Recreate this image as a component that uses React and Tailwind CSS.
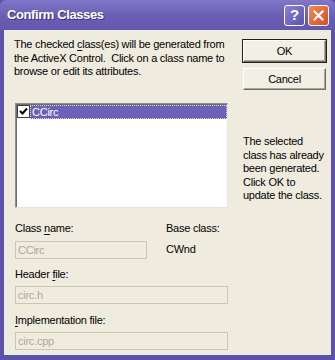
import React from 'react';

const font = { fontFamily: '"Liberation Sans", Arial, sans-serif' };

const U = ({ children }) => <span className="underline underline-offset-[2px]">{children}</span>;

const Field = ({ value, className = '' }) => (
  <div className={`h-[18px] bg-[#efecdf] border border-[#c9c6b6] text-[#aca899] pl-[2px] leading-[16px] ${className}`}>
    {value}
  </div>
);

const Button = ({ label, primary }) => (
  <div className={`h-[24px] w-[85px] flex items-center justify-center ${primary ? 'border border-[#202020]' : 'border border-transparent'}`}>
    <div className="w-full h-full flex items-center justify-center bg-[#f2efe4] border-t border-l border-t-white border-l-white border-r border-b border-r-[#716f64] border-b-[#716f64] shadow-[inset_-1px_-1px_0_#aca899]">
      {label}
    </div>
  </div>
);

export default function App() {
  return (
    <div className="w-[335px] h-[360px] flex flex-col bg-[#5c52aa] text-[11px] tracking-[-0.25px] text-black" style={font}>
      {/* title bar */}
      <div className="h-[30px] flex items-center justify-between pl-[7px] pr-[6px] bg-gradient-to-b from-[#8177c9] via-[#6a5fb4] to-[#6357ae] rounded-t-[6px]">
        <span className="text-white font-bold text-[13px] tracking-[-0.4px] [text-shadow:1px_1px_0_#3b3380]">Confirm Classes</span>
        <div className="flex gap-[3px]">
          <div className="w-[21px] h-[21px] rounded-[3px] border border-white bg-gradient-to-br from-[#8a82d4] to-[#5b51b0] flex items-center justify-center text-white font-bold text-[15px]">?</div>
          <div className="w-[21px] h-[21px] rounded-[3px] border border-white bg-gradient-to-br from-[#f08a55] to-[#d9491f] flex items-center justify-center">
            <svg width="11" height="11" viewBox="0 0 11 11">
              <path d="M1.5 1.5 L9.5 9.5 M9.5 1.5 L1.5 9.5" stroke="white" strokeWidth="2.2" strokeLinecap="square" />
            </svg>
          </div>
        </div>
      </div>

      {/* body */}
      <div className="flex-1 mx-[4px] mb-[5px] bg-[#efecdf] flex pl-[10px] pt-[8px]">
        <div className="w-[214px] flex flex-col">
          <p className="leading-[13.5px] whitespace-nowrap">
            The checked <U>c</U>lass(es) will be generated from<br />
            the ActiveX Control.&nbsp; Click on a class name to<br />
            browse or edit its attributes.
          </p>
          <div className="mt-[24px] ml-[1px] w-[213px] h-[105px] bg-white border border-t-[#8e8e8e] border-l-[#8e8e8e] border-r-[#e8e6dc] border-b-[#e8e6dc] shadow-[inset_1px_1px_0_#6d6d6d]">
            <div className="flex items-center h-[14px] mt-[1px] ml-[1px]">
              <div className="w-[13px] h-[13px] border border-[#404040] bg-white flex items-center justify-center shrink-0">
                <svg width="9" height="9" viewBox="0 0 9 9">
                  <path d="M1 4 L3.5 6.5 L8 1.5" stroke="black" strokeWidth="2" fill="none" />
                </svg>
              </div>
              <div className="flex-1 h-[14px] bg-[#6c61b8] text-white leading-[12px] pl-[1px] border border-dotted border-[#d8d4f0]">CCirc</div>
            </div>
          </div>

          <div className="flex mt-[14px] ml-[1px]">
            <div className="w-[132px] flex flex-col">
              <div className="leading-[13px]">Class <U>n</U>ame:</div>
              <Field value="CCirc" className="mt-[6px]" />
            </div>
            <div className="ml-[19px] flex flex-col">
              <div className="leading-[13px]">Base class:</div>
              <div className="leading-[13px] mt-[8px]">CWnd</div>
            </div>
          </div>

          <div className="mt-[9px] ml-[1px] leading-[13px]">Header <U>f</U>ile:</div>
          <Field value="circ.h" className="mt-[5px] ml-[1px] w-[213px]" />

          <div className="mt-[10px] ml-[1px] leading-[13px]"><U>I</U>mplementation file:</div>
          <Field value="circ.cpp" className="mt-[5px] ml-[1px] w-[213px]" />
        </div>

        <div className="ml-[14px] flex flex-col pt-[1px]">
          <Button label="OK" primary />
          <div className="mt-[4px]"><Button label="Cancel" /></div>
          <p className="mt-[44px] leading-[13.5px] pl-[1px] whitespace-nowrap">
            The selected<br />
            class has already<br />
            been generated.<br />
            Click OK to<br />
            update the class.
          </p>
        </div>
      </div>
    </div>
  );
}
